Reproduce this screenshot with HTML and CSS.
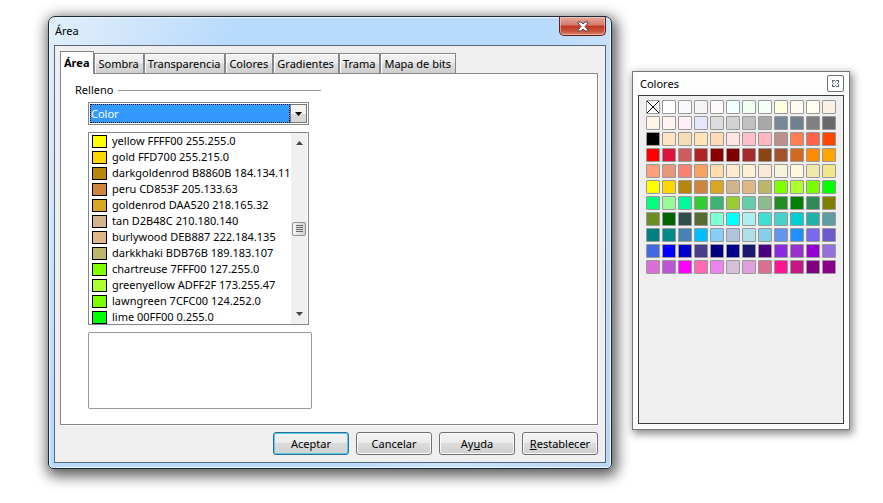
FILE: index.html
```html
<!DOCTYPE html>
<html lang="es">
<head>
    <meta charset="UTF-8">
    <meta name="viewport" content="width=device-width, initial-scale=1.0">
    <title>Área</title>
    <link rel="stylesheet" href="styles.css">
</head>
<body>
    <!-- Area dialog -->
    <section class="dialog" role="dialog" aria-labelledby="dialog-title">
        <header class="titlebar">
            <h1 class="title" id="dialog-title">Área</h1>
            <button class="btn-close" type="button" aria-label="Cerrar">
                <svg width="12" height="11" viewBox="0 0 12 11">
                    <path d="M1 1h3l2 2 2-2h3v1L8 5.500l3 3.500v1H8L6 8l-2 2H1V9l3-3.500L1 2z" fill="#fff" stroke="#55434a" stroke-width="1"/>
                </svg>
            </button>
        </header>
        <form class="client">
            <div class="tabs" role="tablist">
                <button class="tab active" type="button" role="tab" aria-selected="true">Área</button>
                <button class="tab" type="button" role="tab">Sombra</button>
                <button class="tab" type="button" role="tab">Transparencia</button>
                <button class="tab" type="button" role="tab">Colores</button>
                <button class="tab" type="button" role="tab">Gradientes</button>
                <button class="tab" type="button" role="tab">Trama</button>
                <button class="tab" type="button" role="tab">Mapa de bits</button>
            </div>
            <div class="panel" role="tabpanel">
                <label class="group-label" for="fill-type">Relleno</label>
                <div class="fields">
                    <div class="dropdown">
                        <select id="fill-type">
                            <option>Color</option>
                        </select>
                        <span class="dropdown-arrow"><svg width="7" height="4" viewBox="0 0 7 4"><path d="M0 0h7L3.500 4z"/></svg></span>
                    </div>
                    <div class="listbox">
                        <ul class="color-list" id="color-list" role="listbox" aria-label="Colores"></ul>
                        <div class="scrollbar">
                            <svg width="7" height="4" viewBox="0 0 7 4"><path d="M0 4h7L3.500 0z" fill="#444"/></svg>
                            <span class="thumb"><svg width="7" height="8" viewBox="0 0 7 8"><path d="M0 .5h7M0 2.500h7M0 4.500h7M0 6.500h7" stroke="#666"/></svg></span>
                            <svg width="7" height="4" viewBox="0 0 7 4"><path d="M0 0h7L3.500 4z" fill="#444"/></svg>
                        </div>
                    </div>
                    <div class="preview"></div>
                </div>
            </div>
            <div class="actions">
                <button class="btn default" type="button">Aceptar</button>
                <button class="btn" type="button">Cancelar</button>
                <button class="btn" type="button">Ay<u>u</u>da</button>
                <button class="btn" type="button"><u>R</u>establecer</button>
            </div>
        </form>
    </section>

    <!-- Floating palette -->
    <aside class="palette">
        <header class="palette-header">
            <h2 class="title">Colores</h2>
            <button class="palette-close" type="button" aria-label="Cerrar">
                <svg width="7" height="7" viewBox="0 0 7 7">
                    <path d="M.5.5h2l1 1 1-1h2v2l-1 1 1 1v2h-2l-1-1-1 1h-2v-2l1-1-1-1z" fill="#fff" stroke="#4b5263"/>
                </svg>
            </button>
        </header>
        <div class="palette-body">
            <div class="swatches" id="swatches">
                <button class="swatch none" type="button" aria-label="Sin relleno">
                    <svg width="12" height="12" viewBox="0 0 12 12"><path d="M0 0l12 12M12 0L0 12" stroke="#000"/></svg>
                </button>
            </div>
        </div>
    </aside>

    <script src="script.js"></script>
</body>
</html>
```

FILE: styles.css
```css
* {
    box-sizing: border-box;
}
body {
    margin: 0;
    padding: 16px 33px 32px 48px;
    display: grid;
    grid-template-columns: minmax(0, 564fr) minmax(0, 218fr);
    gap: 20px;
    align-items: start;
    background: #fff;
    color: #000;
    font-family: "Noto Sans", "Open Sans", sans-serif;
    font-size: 11px;
    line-height: 16px;
}
button, select {
    font: inherit;
    color: inherit;
    margin: 0;
    padding: 0;
}
svg {
    display: block;
}
.title {
    margin: 0;
    font-size: 11px;
    font-weight: normal;
}

/* Dialog */
.dialog {
    padding: 0 5px 5px;
    border: 1px solid #1c2a38;
    border-radius: 7px 7px 5px 5px;
    background: linear-gradient(115deg, #e2effc 0, #cfe5fb 12%, #b8dafb 25%, #b8dafb 65%, #cde3f9 78%, #b9d6f5 100%);
    box-shadow: inset 0 0 0 1px #e9f5ff, 2px 4px 14px 3px rgba(0, 0, 0, 0.65);
}
.titlebar {
    display: flex;
    justify-content: space-between;
    align-items: flex-start;
    height: 28px;
}
.titlebar .title {
    padding: 6px 1px;
}
.btn-close {
    display: flex;
    justify-content: center;
    align-items: center;
    width: 47px;
    height: 19px;
    border: 1px solid #5c1f1c;
    border-top: none;
    border-radius: 0 0 5px 5px;
    background: linear-gradient(#e6aa9c 0, #d4796a 45%, #bd3823 50%, #c9543d 80%, #dd8a6c 100%);
    box-shadow: inset 0 0 0 1px rgba(255, 220, 210, 0.5);
}
.client {
    padding: 5px 7px 7px 5px;
    border: 1px solid #56677d;
    background: #efefef;
}
.tabs {
    display: flex;
    align-items: flex-end;
}
.tab {
    height: 20px;
    padding: 0 4px 0 3px;
    border: 1px solid #85858b;
    border-bottom: none;
    background: linear-gradient(#f2f2f2 0, #ebebeb 48%, #dcdcdc 52%, #cfcfcf 100%);
    box-shadow: inset 1px 1px 0 #fff;
    white-space: nowrap;
}
.tab.active {
    z-index: 1;
    height: 23px;
    margin-bottom: -1px;
    background: #fff;
    font-weight: bold;
}
.panel {
    padding: 8px 14px 15px;
    border: 1px solid #85858b;
    background: #fff;
    box-shadow: 1px 1px 0 #fff;
}
.group-label {
    display: flex;
    align-items: center;
    gap: 5px;
    max-width: 246px;
}
.group-label::after {
    content: "";
    flex: 1;
    border-top: 1px solid #999;
}
.fields {
    display: flex;
    flex-direction: column;
    gap: 7px;
    max-width: 237px;
    padding: 4px 0 0 13px;
}
.dropdown {
    display: flex;
    margin-right: 3px;
    padding: 1px;
    border: 1px solid #85858b;
    background: #fff;
}
.dropdown select {
    flex: 1;
    height: 19px;
    appearance: none;
    border: 1px dotted #000;
    border-radius: 0;
    background: #3399ff;
    color: #fff;
}
.dropdown-arrow {
    display: flex;
    justify-content: center;
    align-items: center;
    width: 17px;
    border: 1px solid #777;
    background: linear-gradient(#f4f4f4 50%, #d8d8d8 50%);
}
.listbox {
    display: flex;
    height: 193px;
    margin-right: 3px;
    padding: 0 1px;
    border: 1px solid #85858b;
}
.color-list {
    flex: 1;
    margin: 0;
    padding: 0 2px;
    overflow: hidden;
    list-style: none;
}
.color-list li {
    display: flex;
    align-items: center;
    gap: 5px;
    height: 16px;
    line-height: 12px;
    white-space: nowrap;
}
.chip {
    flex-shrink: 0;
    width: 15px;
    height: 13px;
    border: 1px solid #000;
}
.scrollbar {
    display: flex;
    flex-direction: column;
    justify-content: space-between;
    align-items: center;
    width: 16px;
    padding: 8px 0;
    background: #f0f0f0;
}
.thumb {
    display: flex;
    justify-content: center;
    align-items: center;
    width: 14px;
    height: 14px;
    border: 1px solid #929292;
    border-radius: 2px;
    background: linear-gradient(to right, #f6f6f6, #d2d2d2);
}
.preview {
    height: 77px;
    border: 1px solid #999;
    border-radius: 2px;
}
.actions {
    display: flex;
    justify-content: flex-end;
    gap: 7px;
    padding-top: 7px;
}
.btn {
    width: 76px;
    height: 23px;
    border: 1px solid #707070;
    border-radius: 3px;
    background: linear-gradient(#f3f3f3 0, #ebebeb 50%, #dcdcdc 50%, #cfcfcf 100%);
    box-shadow: inset 0 0 0 1px #fafafa;
}
.btn.default {
    border-color: #2c6f95;
    box-shadow: inset 0 0 0 1px #57cdf0;
}

/* Palette */
.palette {
    margin-top: 55px;
    padding: 0 5px 5px;
    border: 1px solid #777;
    background: #fdfdfd;
    box-shadow: 2px 3px 8px 1px rgba(0, 0, 0, 0.45);
}
.palette-header {
    display: flex;
    justify-content: space-between;
    align-items: center;
    height: 23px;
    padding-left: 2px;
}
.palette-close {
    display: flex;
    justify-content: center;
    align-items: center;
    width: 17px;
    height: 17px;
    border: 1px solid #6c7079;
    border-radius: 2px;
    background: #fff;
}
.palette-body {
    min-height: 329px;
    padding: 4px 7px;
    border: 1px solid #3c3c3c;
    background: #efefef;
}
.swatches {
    display: grid;
    grid-template-columns: repeat(12, 14px);
    gap: 2px;
}
.swatch {
    height: 14px;
    border: 1px solid #999;
    border-radius: 1px;
}
.swatch.none {
    background: #fff;
}
```

FILE: script.js
```js
const listColors = [
    ['yellow', 'FFFF00'],
    ['gold', 'FFD700'],
    ['darkgoldenrod', 'B8860B'],
    ['peru', 'CD853F'],
    ['goldenrod', 'DAA520'],
    ['tan', 'D2B48C'],
    ['burlywood', 'DEB887'],
    ['darkkhaki', 'BDB76B'],
    ['chartreuse', '7FFF00'],
    ['greenyellow', 'ADFF2F'],
    ['lawngreen', '7CFC00'],
    ['lime', '00FF00']
];

// the first cell of the palette is "no fill", so the first row has 11 colors
const paletteColors = [
    'white ghostwhite whitesmoke snow azure honeydew mintcream lightyellow floralwhite ivory linen',
    'oldlace seashell lavenderblush lavender gainsboro lightgray silver darkgray lightslategray slategray gray dimgray',
    'black bisque wheat moccasin peachpuff mistyrose pink lightpink rosybrown coral tomato orangered',
    'red crimson indianred firebrick darkred maroon brown saddlebrown sienna chocolate darkorange orange',
    'lightsalmon darksalmon salmon sandybrown navajowhite blanchedalmond papayawhip antiquewhite beige cornsilk palegoldenrod khaki',
    'yellow gold darkgoldenrod peru goldenrod tan burlywood darkkhaki chartreuse greenyellow lawngreen lime',
    'springgreen palegreen mediumspringgreen limegreen mediumseagreen yellowgreen mediumaquamarine darkseagreen forestgreen green seagreen olive',
    'olivedrab darkgreen darkslategray darkolivegreen aquamarine aqua paleturquoise turquoise mediumturquoise darkturquoise lightseagreen cadetblue',
    'teal darkcyan steelblue deepskyblue lightskyblue lightsteelblue powderblue skyblue cornflowerblue dodgerblue mediumslateblue slateblue',
    'royalblue blue mediumblue darkslateblue navy darkblue midnightblue indigo blueviolet darkorchid darkviolet mediumpurple',
    'orchid mediumorchid magenta hotpink violet thistle plum palevioletred deeppink mediumvioletred purple darkmagenta'
].join(' ').split(' ');

const colorList = document.getElementById('color-list');
const swatches = document.getElementById('swatches');

function toRgb(hex) {
    return [0, 2, 4].map(i => parseInt(hex.slice(i, i + 2), 16)).join('.');
}

listColors.forEach(([name, hex]) => {
    const item = document.createElement('li');
    const chip = document.createElement('span');
    item.setAttribute('role', 'option');
    chip.className = 'chip';
    chip.style.background = '#' + hex;
    item.append(chip, `${name} ${hex} ${toRgb(hex)}`);
    colorList.appendChild(item);
});

paletteColors.forEach(color => {
    const swatch = document.createElement('button');
    swatch.type = 'button';
    swatch.className = 'swatch';
    swatch.setAttribute('aria-label', color);
    swatch.style.background = color;
    swatches.appendChild(swatch);
});
```
